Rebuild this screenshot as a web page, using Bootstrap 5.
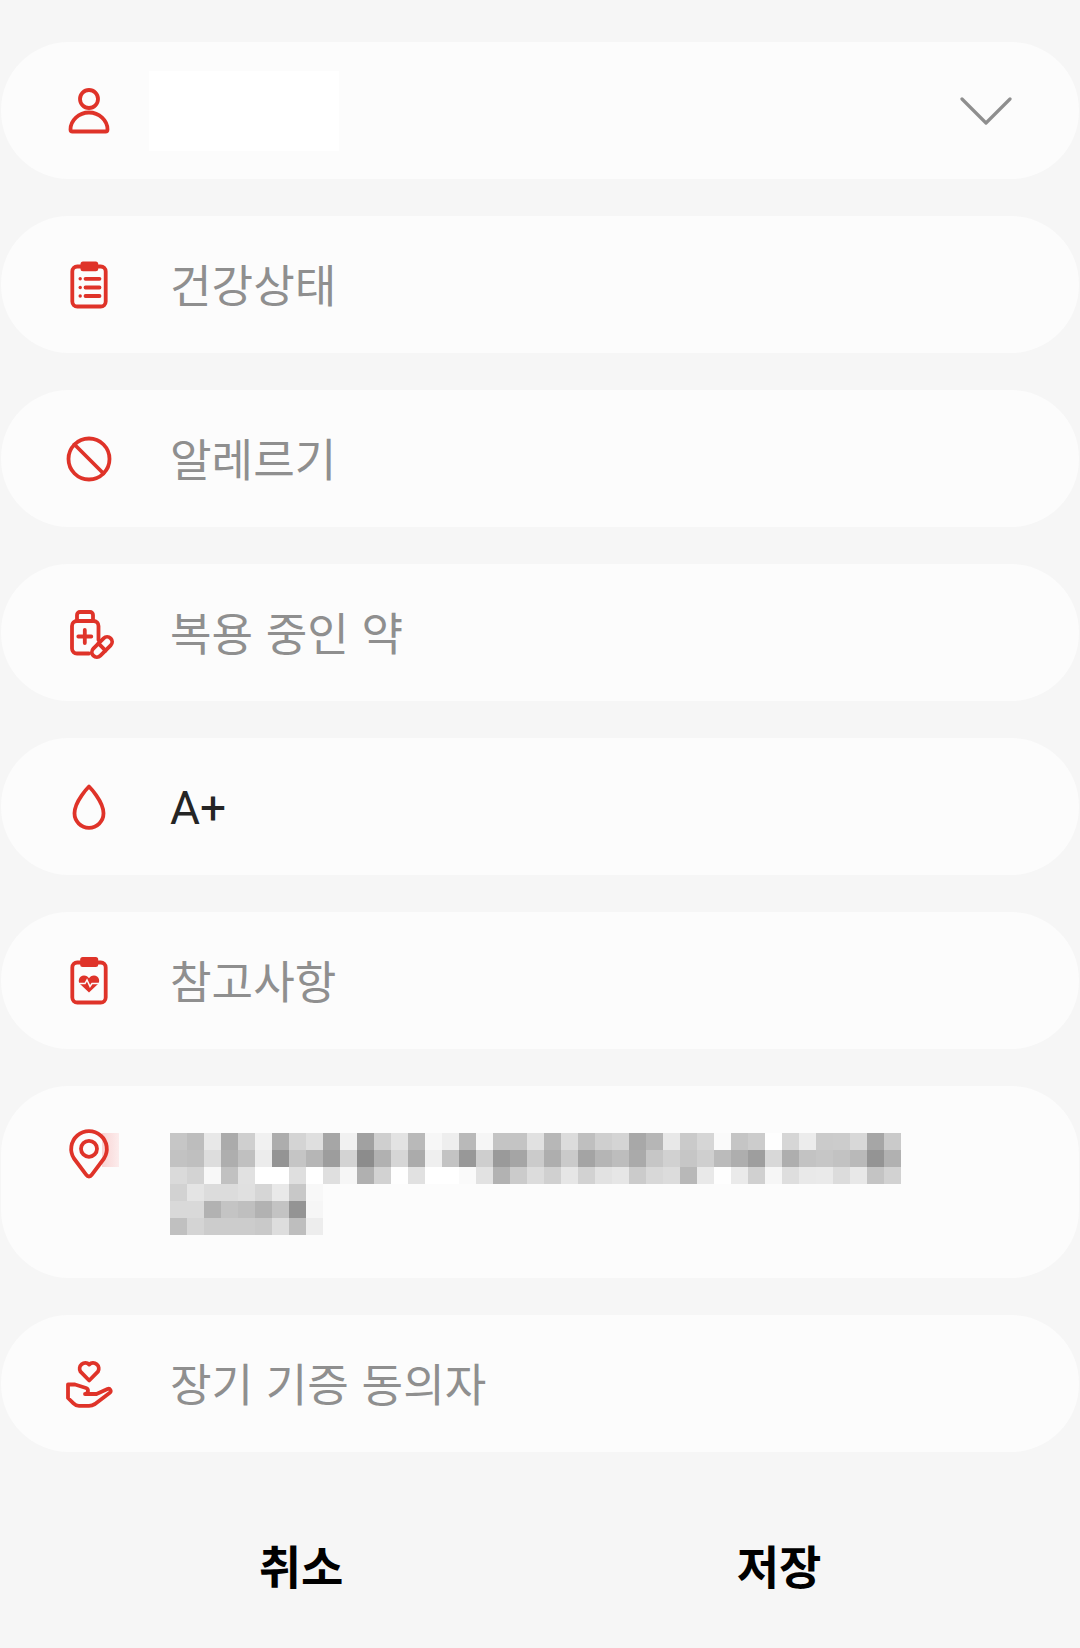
<!DOCTYPE html>
<html lang="ko">
  <head>
    <meta charset="UTF-8" />
    <meta name="viewport" content="width=device-width, initial-scale=1.0" />
    <title>의료 정보 수정</title>
    <link
      href="https://cdn.jsdelivr.net/npm/bootstrap@5.3.0/dist/css/bootstrap.min.css"
      rel="stylesheet"
    />
    <style>
      body {
        background: #f6f6f6;
        font-family: "Noto Sans CJK KR", "Noto Sans", sans-serif;
      }
      .info-list {
        padding: 42px 1px 0;
        gap: 37px;
      }
      .info-row {
        min-height: 137px;
        background: #fcfcfc;
        border-radius: 68px;
        padding-left: 64px;
      }
      .addr-row {
        min-height: 192px;
        padding-top: 44px;
      }
      .ico-box {
        width: 54px;
        height: 48px;
        margin-right: 51px;
      }
      .ico-box svg {
        overflow: visible;
      }
      .ico-line {
        fill: none;
        stroke: #df3329;
        stroke-width: 3.8;
        stroke-linecap: round;
        stroke-linejoin: round;
      }
      .ico-fill {
        fill: #df3329;
      }
      .name-mask {
        width: 190px;
        height: 80px;
        background: #fff;
        margin-left: -21px;
      }
      .field-text {
        font-size: 45.2px;
        line-height: 1;
        color: #8f8f8f;
        padding-bottom: 1px;
      }
      .field-value {
        font-family: Roboto, "Noto Sans", sans-serif;
        font-size: 46px;
        padding-top: 3px;
        padding-bottom: 0;
        color: #252525;
      }
      .chevron-box {
        padding-right: 67px;
      }
      .addr-tint {
        left: 101px;
        top: 47px;
        width: 17px;
        height: 34px;
        background: linear-gradient(to right, #f8d4d4, #fcecec);
      }
      .addr-mosaic {
        display: grid;
        grid-template-columns: repeat(43, 17px);
        grid-auto-rows: 17px;
        margin-top: 3px;
      }
      .action-bar {
        padding: 28px 62px 0;
        height: 196px;
      }
      .action-btn {
        font-size: 46px;
        font-weight: 700;
        line-height: 1;
        color: #000;
        border: 0;
      }
    </style>
  </head>
  <body>
    <div class="d-flex flex-column info-list">
      <div class="d-flex align-items-center info-row">
        <div class="ico-box flex-shrink-0">
          <svg width="48" height="48" viewBox="0 0 48 48">
            <circle class="ico-line" cx="24" cy="12" r="9" />
            <path class="ico-line" d="M7.5 44.5h33a2 2 0 0 0 2-2c0-9-8.200-17-18.500-17S5.500 33.500 5.500 42.500a2 2 0 0 0 2 2z" />
          </svg>
        </div>
        <div class="name-mask"></div>
        <div class="ms-auto chevron-box">
          <svg class="d-block" width="52" height="28" viewBox="0 0 52 28">
            <path d="M2 2l24 24L50 2" fill="none" stroke="#8e8e8e" stroke-width="3.200" stroke-linecap="round" stroke-linejoin="round" />
          </svg>
        </div>
      </div>

      <div class="d-flex align-items-center info-row">
        <div class="ico-box flex-shrink-0">
          <svg width="48" height="48" viewBox="0 0 48 48">
            <rect class="ico-line" x="7.300" y="5.500" width="33.400" height="40" rx="5" />
            <rect class="ico-fill" x="15.500" y="0.500" width="17.700" height="9.700" rx="2.500" />
            <path class="ico-line" d="M20.500 17.800h14M20.500 26.500h14M20.500 35h14" stroke-width="3" />
            <circle class="ico-fill" cx="15.200" cy="17.800" r="1.700" />
            <circle class="ico-fill" cx="15.200" cy="26.500" r="1.700" />
            <circle class="ico-fill" cx="15.200" cy="35" r="1.700" />
          </svg>
        </div>
        <span class="field-text">건강상태</span>
      </div>

      <div class="d-flex align-items-center info-row">
        <div class="ico-box flex-shrink-0">
          <svg width="48" height="48" viewBox="0 0 48 48">
            <circle class="ico-line" cx="24" cy="24" r="20.500" />
            <path class="ico-line" d="M9.500 9.500l29 29" />
          </svg>
        </div>
        <span class="field-text">알레르기</span>
      </div>

      <div class="d-flex align-items-center info-row">
        <div class="ico-box flex-shrink-0">
          <svg width="48" height="48" viewBox="0 0 48 48">
            <path class="ico-line" d="M33.500 31V17a5 5 0 0 0-5-5H12a5 5 0 0 0-5 5v22.500a5 5 0 0 0 5 5h12" />
            <path class="ico-line" d="M12 12V6a3 3 0 0 1 3-3h10a3 3 0 0 1 3 3v6" />
            <path class="ico-line" d="M13.300 27.500h13M19.800 21v13" />
            <g transform="rotate(-45 37 38)">
              <rect class="ico-line" x="24.750" y="33" width="24.500" height="10" rx="5" stroke-width="3.200" />
              <path class="ico-line" d="M37 33v10" stroke-width="3" />
            </g>
          </svg>
        </div>
        <span class="field-text">복용 중인 약</span>
      </div>

      <div class="d-flex align-items-center info-row">
        <div class="ico-box flex-shrink-0">
          <svg width="48" height="48" viewBox="0 0 48 48">
            <path class="ico-line" d="M24 3.500S9.500 18 9.500 30.300a14.500 14.500 0 0 0 29 0C38.500 18 24 3.500 24 3.500z" />
          </svg>
        </div>
        <span class="field-text field-value">A+</span>
      </div>

      <div class="d-flex align-items-center info-row">
        <div class="ico-box flex-shrink-0">
          <svg width="48" height="48" viewBox="0 0 48 48">
            <rect class="ico-line" x="7.300" y="5.500" width="33.400" height="40" rx="5" />
            <rect class="ico-fill" x="15.200" y="0" width="18" height="10" rx="2.500" />
            <path class="ico-fill" d="M24 35.500L15 27c-2.500-2.500-1-8.500 4-8.500 2.300 0 4 1.200 5 2.800 1-1.600 2.700-2.800 5-2.800 5 0 6.500 6 4 8.500z" />
            <path d="M13.500 26.500H20l2-3.500 3 6.500 2-3h7" fill="none" stroke="#fcfcfc" stroke-width="1.500" />
          </svg>
        </div>
        <span class="field-text">참고사항</span>
      </div>

      <div class="d-flex align-items-start info-row addr-row position-relative">
        <div class="addr-tint position-absolute"></div>
        <div class="ico-box flex-shrink-0 position-relative">
          <svg width="48" height="48" viewBox="0 0 48 48">
            <path class="ico-line" d="M24 46.500c-1.300 0-2.200-.8-2.900-1.800L9 28.500a17.800 17.800 0 1 1 30 0L26.900 44.700c-.7 1-1.600 1.800-2.900 1.800z" />
            <circle class="ico-line" cx="24" cy="18.800" r="8" />
          </svg>
        </div>
        <div class="addr-mosaic" id="addrMosaic"></div>
      </div>

      <div class="d-flex align-items-center info-row">
        <div class="ico-box flex-shrink-0">
          <svg width="48" height="48" viewBox="0 0 48 48">
            <path class="ico-line" d="M24.200 20.500l-8.700-8.800a5.700 5.700 0 0 1 8.700-7.200 5.700 5.700 0 0 1 8.700 7.200z" />
            <path class="ico-line" d="M3 24.500h7L21 28c3 1 2.500 6-1 6h11.500l11-5c2.500-1 4.500 2 2 4L30 44c-2 1.200-4 1.800-6 1.800H14c-2 0-4-1-5.500-2.500L3 38z" />
          </svg>
        </div>
        <span class="field-text">장기 기증 동의자</span>
      </div>
    </div>

    <div class="d-flex align-items-center action-bar">
      <button type="button" class="btn flex-fill action-btn p-0">취소</button>
      <button type="button" class="btn flex-fill action-btn p-0">저장</button>
    </div>

    <script>
      // blurred address, one string per row, two hex digits per cell
      const rows = [
        "c6bde8abcff1add4dfa6f1a1cfe3b9f7eeb9f6c4c4e1b7dcbfcfd4a8b6e8cad6fac5ccfed6eccbccd8a6ca",
        "c2bfddaec0ec94c5b69dd38cb1d6abefc398ce9aa5cbaecaa4b5bdaac6d1c6cfbbae9ed8aec3c6c2b994b1",
        "dad3f8c1e1ffffdfffdff6b0d2fee1fffffae2b2cbdcd0e6d2e2e6cbd8dcb8e9feead0f6dee9eadce8c4d2",
        "d2e4dcdce0d6e9c8f8",
        "d9d9b2c4bfb2c394f6",
        "c0d4cccccc" + "c9ddbeed",
      ];
      const mosaic = document.getElementById("addrMosaic");
      rows.forEach((row) => {
        for (let i = 0; i < 43; i++) {
          const cell = document.createElement("div");
          const v = row.substr(i * 2, 2);
          if (v) cell.style.background = "#" + v + v + v;
          mosaic.appendChild(cell);
        }
      });
    </script>
    <script src="https://cdn.jsdelivr.net/npm/bootstrap@5.3.0/dist/js/bootstrap.bundle.min.js"></script>
  </body>
</html>
